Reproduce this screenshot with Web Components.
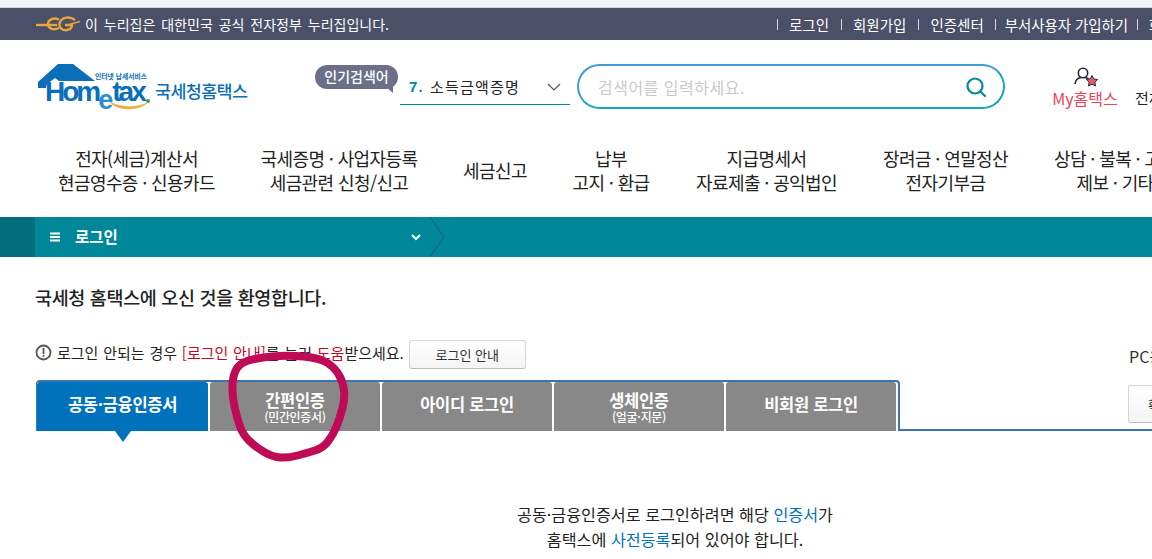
<!DOCTYPE html>
<html lang="ko">
<head>
<meta charset="utf-8">
<title>국세청 홈택스</title>
<style>
  html, body { margin: 0; padding: 0; background: #fff; }
  body {
    width: 1152px;
    height: 559px;
    overflow: hidden;
    position: relative;
    font-family: "Noto Sans CJK KR", "Noto Sans", sans-serif;
  }
</style>
</head>
<body>
<ht-topbar></ht-topbar>
<ht-header></ht-header>
<ht-nav></ht-nav>
<ht-menubar></ht-menubar>
<ht-login></ht-login>
<ht-scribble></ht-scribble>

<script>
const define = (name, html) => {
  customElements.define(name, class extends HTMLElement {
    constructor () {
      super()
      const template = document.createElement('template')
      template.innerHTML = html
      this.attachShadow({ mode: 'open' })
        .appendChild(template.content.cloneNode(true))
    }
  })
}

define('ht-topbar', `
  <style>
    :host { display: block; background: #f3f4f6; padding-top: 7px; }
    #bar {
      display: flex;
      align-items: center;
      height: 32px;
      border-top: 1px solid #d4d4d6;
      background: #4b5069;
      color: #fff;
      font-size: 14px;
      word-spacing: 2px;
      white-space: nowrap;
      padding-left: 36px;
    }
    svg { margin-right: 5px; flex: none; }
    #gov { flex: none; width: 305px; }
    ul { display: flex; flex: none; list-style: none; margin: 0 0 0 387px; padding: 0; word-spacing: 0; }
    li { display: flex; align-items: center; font-size: 14.500px; }
    li::before { content: ""; width: 1px; height: 11px; background: #d9dbe3; margin: 0 11px 0 12px; }
    li:first-child::before { margin-left: 0; }
    li:nth-child(4) { letter-spacing: -.1px; }
    li:nth-child(4)::before { margin: 0 9px 0 11px; }
    li:last-child::before { margin-left: 9px; }
  </style>
  <div id="bar">
    <svg width="44" height="16" viewBox="0 0 44 16" fill="none" stroke="#e8a63c" stroke-width="2.400">
      <path d="M0 9h21"/>
      <path d="M23 3.500C17 1 12 4 12 8c0 4 5 7 11 4"/>
      <path d="M39 4c-5-4-13-3-15 2-2 5 2 9 7 8 3-.5 5-2 5-5h-7"/>
      <path d="M33 8.500 44 5.500" stroke-width="1.400"/>
    </svg>
    <span id="gov">이 누리집은 대한민국 공식 전자정부 누리집입니다.</span>
    <ul>
      <li>로그인</li><li>회원가입</li><li>인증센터</li><li>부서사용자 가입하기</li><li>화면크기</li>
    </ul>
  </div>
`)

define('ht-header', `
  <style>
    :host {
      display: flex;
      align-items: flex-start;
      height: 90px;
      padding-left: 38px;
      white-space: nowrap;
      box-sizing: border-box;
    }
    #logo { position: relative; width: 212px; height: 50px; margin-top: 24px; flex: none; }
    #logo svg { position: absolute; left: 0; top: 0; z-index: 1; }
    #sub { position: absolute; left: 57px; top: 7px; font-size: 6.800px; font-weight: 700; color: #0a6fb8; line-height: 10px; }
    #home { position: absolute; left: 7px; top: 13px; font: 700 28px/30px "Liberation Sans", sans-serif; letter-spacing: -3px; color: #0a6fb8; }
    #home i { font-style: normal; font-size: 27px; position: relative; top: 8px; color: #2b8fd0; margin: 0 2px 0 0; }
    #name { position: absolute; left: 117px; top: 15px; font-size: 17.400px; line-height: 24px; font-weight: 500; color: #0a6fb8; letter-spacing: -.6px; }
    #pop {
      position: relative;
      flex: none;
      margin: 25px 0 0 65px;
      width: 83px;
      height: 24px;
      border-radius: 12px;
      background: #6c6f8a;
      color: #fff;
      font-size: 14px;
      font-weight: 500;
      line-height: 23px;
      text-align: center;
    }
    #pop::after {
      content: "";
      position: absolute;
      right: 5px;
      top: 22px;
      border-top: 6px solid #6c6f8a;
      border-left: 7px solid transparent;
    }
    #rank {
      flex: none;
      display: flex;
      align-items: center;
      box-sizing: border-box;
      width: 170px;
      height: 35px;
      margin: 30px 7px 0 2px;
      padding: 0 8px 1px 9px;
      border-bottom: 1px solid #00889a;
      font-size: 15px;
      letter-spacing: 1.200px;
      color: #222;
    }
    #rank b { color: #00889a; margin-right: 6px; font: 700 15px "Liberation Sans", sans-serif; }
    #rank svg { margin-left: auto; margin-right: 1px; }
    #search {
      flex: none;
      display: flex;
      align-items: center;
      justify-content: space-between;
      box-sizing: border-box;
      width: 428px;
      height: 45px;
      margin-top: 24px;
      padding: 0 16px 0 19px;
      border: 2px solid;
      border-color: #3f9bdc #14a7c0 #14a7c0 #3f9bdc;
      border-radius: 23px;
      color: #c9c9c9;
      font-size: 16px;
      letter-spacing: .5px;
    }
    #my { flex: none; width: 68px; margin: 26px 0 0 46px; text-align: center; color: #ee4259; font-size: 16px; line-height: 20px; }
    #my svg { display: block; margin: 0 auto; position: relative; left: 1px; }
    #all { flex: none; margin: 48px 0 0 16px; font-size: 15px; line-height: 20px; color: #222; }
  </style>
  <div id="logo">
    <svg width="212" height="50" viewBox="0 0 212 50" fill="none">
      <path d="M0 18 20 0h15l22 17H21l-4-3-8 6-1 4H0z" fill="#0a6fb8"/>
      <path d="M72 38c6 8 26 10 37 1-11 5-26 5-37-1z" fill="#f0a83a" stroke="#f0a83a" stroke-width=".6"/>
      <circle cx="110" cy="37" r="2" fill="#3aa535"/>
    </svg>
    <span id="sub">인터넷 납세서비스</span>
    <span id="home">Hom<i>e</i>tax</span>
    <span id="name">국세청홈택스</span>
  </div>
  <div id="pop">인기검색어</div>
  <div id="rank">
    <b>7.</b>소득금액증명
    <svg width="14" height="8" viewBox="0 0 14 8" fill="none" stroke="#555" stroke-width="1.200"><path d="M1 1l6 6 6-6"/></svg>
  </div>
  <div id="search">
    검색어를 입력하세요.
    <svg width="22" height="22" viewBox="0 0 22 22" fill="none" stroke="#008a99" stroke-width="2.200"><circle cx="10" cy="10" r="7.500"/><path d="M15.500 15.500 20 20" stroke-linecap="round"/></svg>
  </div>
  <div id="my">
    <svg width="28" height="22" viewBox="0 0 28 22">
      <circle cx="11" cy="7" r="4.700" fill="none" stroke="#222a3a" stroke-width="1.600"/>
      <path d="M3 18c.5-4 3-6 6-6.500M13 11.500c1.500.3 2.500.8 3.500 1.500" fill="none" stroke="#222a3a" stroke-width="1.600"/>
      <path d="M20 9.500l1.800 3.400 3.800.6-2.700 2.700.6 3.800-3.500-1.800-3.500 1.800.6-3.800-2.700-2.700 3.800-.6z" fill="#f2566c" stroke="#222a3a" stroke-width="1"/>
    </svg>
    My홈택스
  </div>
  <div id="all">전체메뉴</div>
`)

define('ht-nav', `
  <style>
    :host {
      display: flex;
      gap: 45px;
      height: 87px;
      box-sizing: border-box;
      padding: 16px 0 0 58px;
      white-space: nowrap;
      font-size: 18px;
      line-height: 24px;
      letter-spacing: -.6px;
      color: #222;
      text-align: center;
    }
    div { flex: none; align-self: flex-start; }
    .one { padding-top: 12px; }
  </style>
  <div style="width:157px">전자(세금)계산서<br>현금영수증 · 신용카드</div>
  <div style="width:158px">국세증명 · 사업자등록<br>세금관련 신청/신고</div>
  <div class="one" style="width:63px">세금신고</div>
  <div style="width:80px">납부<br>고지 · 환급</div>
  <div style="width:141px">지급명세서<br>자료제출 · 공익법인</div>
  <div style="width:127px">장려금 · 연말정산<br>전자기부금</div>
  <div style="width:122px">상담 · 불복 · 고충<br>제보 · 기타</div>
`)

define('ht-menubar', `
  <style>
    :host {
      display: flex;
      height: 40px;
      background: #00889a;
      color: #fff;
      white-space: nowrap;
    }
    #side { width: 35px; background: #006f7c; flex: none; }
    #menu {
      display: flex;
      align-items: center;
      flex: none;
      box-sizing: border-box;
      width: 395px;
      padding: 0 9px 0 15px;
      font-size: 15.500px;
      font-weight: 700;
    }
    #menu span { margin: 0 0 2px 15px; }
    #menu svg:last-child { margin-left: auto; }
  </style>
  <div id="side"></div>
  <div id="menu">
    <svg width="10" height="10" viewBox="0 0 10 10" fill="#fff"><path d="M0 .500h10v2H0zM0 4h10v2H0zM0 7.500h10v2H0z"/></svg>
    <span>로그인</span>
    <svg width="10" height="7" viewBox="0 0 10 7" fill="none" stroke="#fff" stroke-width="2"><path d="M1 1l4 4 4-4"/></svg>
  </div>
  <svg width="16" height="40" viewBox="0 0 16 40" fill="none" stroke="#1f5d68" stroke-width="1" style="flex:none"><path d="M0 0l14 20L0 40"/></svg>
`)

define('ht-tab', `
  <style>
    :host {
      display: flex;
      flex-direction: column;
      align-items: center;
      justify-content: center;
      flex: none;
      box-sizing: border-box;
      width: 170px;
      height: 49px;
      background: #888;
      border-radius: 3px 3px 0 0;
      color: #fff;
      font-size: 16.500px;
      font-weight: 700;
      line-height: 20px;
      letter-spacing: -.3px;
      position: relative;
    }
    :host([single]) { padding-bottom: 5px; }
    :host([active]) { background: #0072bc; width: 171px; }
    :host([active])::after {
      content: "";
      position: absolute;
      left: 78px;
      top: 49px;
      border-top: 11px solid #0072bc;
      border-left: 8px solid transparent;
      border-right: 8px solid transparent;
    }
    small { font-size: 12px; font-weight: 500; line-height: 14px; letter-spacing: -.3px; }
  </style>
  <slot></slot>
  <small><slot name="sub"></slot></small>
`)

define('ht-login', `
  <style>
    :host { display: block; padding: 26px 0 0 0; white-space: nowrap; color: #222; position: relative; }
    h1 { margin: 0 0 0 35px; font-size: 18.500px; line-height: 28px; font-weight: 500; letter-spacing: -.35px; }
    #notice {
      display: flex;
      align-items: center;
      height: 30px;
      margin: 26px 0 0 35px;
      font-size: 15px;
      word-spacing: .6px;
      color: #222;
    }
    #notice svg { margin-right: 5px; flex: none; }
    #notice em { font-style: normal; color: #d0021b; }
    button {
      font: inherit;
      font-size: 13px;
      color: #333;
      background: linear-gradient(#fff, #f4f4f4);
      border: 1px solid #d5d5d5;
      border-bottom-color: #bbb;
      border-radius: 3px;
      padding: 0;
      flex: none;
    }
    #guide { width: 117px; height: 29px; margin: 5px 0 0 5px; }
    #pc { position: absolute; left: 1129px; top: 89px; font-size: 16px; line-height: 20px; color: #333; }
    #row { display: flex; margin: 13px 0 0 36px; height: 51px; }
    #tabs {
      display: flex;
      gap: 2px;
      flex: none;
      width: 864px;
      box-sizing: border-box;
      border-top: 2px solid #3f73b0;
      border-left: 1px solid #3f73b0;
      border-right: 2px solid #3f73b0;
      border-radius: 4px 4px 0 0;
    }
    #fill { flex: 1; border-bottom: 2px solid #3f73b0; padding: 5px 0 0 228px; }
    #fill button { display: block; width: 60px; height: 38px; text-align: left; padding-left: 19px; }
    #msg { margin: 71px 0 0; text-align: center; font-size: 16.200px; line-height: 25px; width: 1350px; }
    #msg b { font-weight: 400; color: #0072bc; }
  </style>
  <h1>국세청 홈택스에 오신 것을 환영합니다.</h1>
  <div id="notice">
    <svg width="17" height="17" viewBox="0 0 17 17"><circle cx="8.500" cy="8.500" r="7" fill="none" stroke="#555" stroke-width="1.800"/><path d="M7.600 4h1.800v6H7.600zM7.600 11h1.800v1.800H7.600z" fill="#555"/></svg>
    <span>로그인 안되는 경우 <em>[로그인 안내]</em>를 눌러 <em>도움</em>받으세요.</span>
    <button id="guide">로그인 안내</button>
  </div>
  <div id="pc">PC용</div>
  <div id="row">
    <div id="tabs">
      <ht-tab active single>공동·금융인증서</ht-tab>
      <ht-tab>간편인증<span slot="sub">(민간인증서)</span></ht-tab>
      <ht-tab single>아이디 로그인</ht-tab>
      <ht-tab>생체인증<span slot="sub">(얼굴·지문)</span></ht-tab>
      <ht-tab single>비회원 로그인</ht-tab>
    </div>
    <div id="fill"><button>확인</button></div>
  </div>
  <div id="msg">공동·금융인증서로 로그인하려면 해당 <b>인증서</b>가<br>홈택스에 <b>사전등록</b>되어 있어야 합니다.</div>
`)

define('ht-scribble', `
  <style>
    :host { position: absolute; left: 225px; top: 350px; width: 125px; height: 116px; pointer-events: none; }
  </style>
  <svg width="125" height="116" viewBox="0 0 125 116" fill="none" stroke="#bf0a55" stroke-width="8" stroke-linecap="round" stroke-linejoin="round">
    <path d="M78.500 6.500Q62 5 47 6.500 32 8 23.500 10.500 15 13 11.500 19 8 25 7.500 35 7 45 9.500 56.500 12 68 15 76.500 18 85 25 91.500 32 98 40 102.500 48 107 55.500 107.500 63 108 72.500 105.500 82 103 90 100.500 98 98 103 91.500 108 85 111.500 76.500 115 68 117.500 58 120 48 119 40 118 32 114 25 110 18 102.500 13 95 8 78.500 6.500Z"/>
  </svg>
`)
</script>
</body>
</html>
